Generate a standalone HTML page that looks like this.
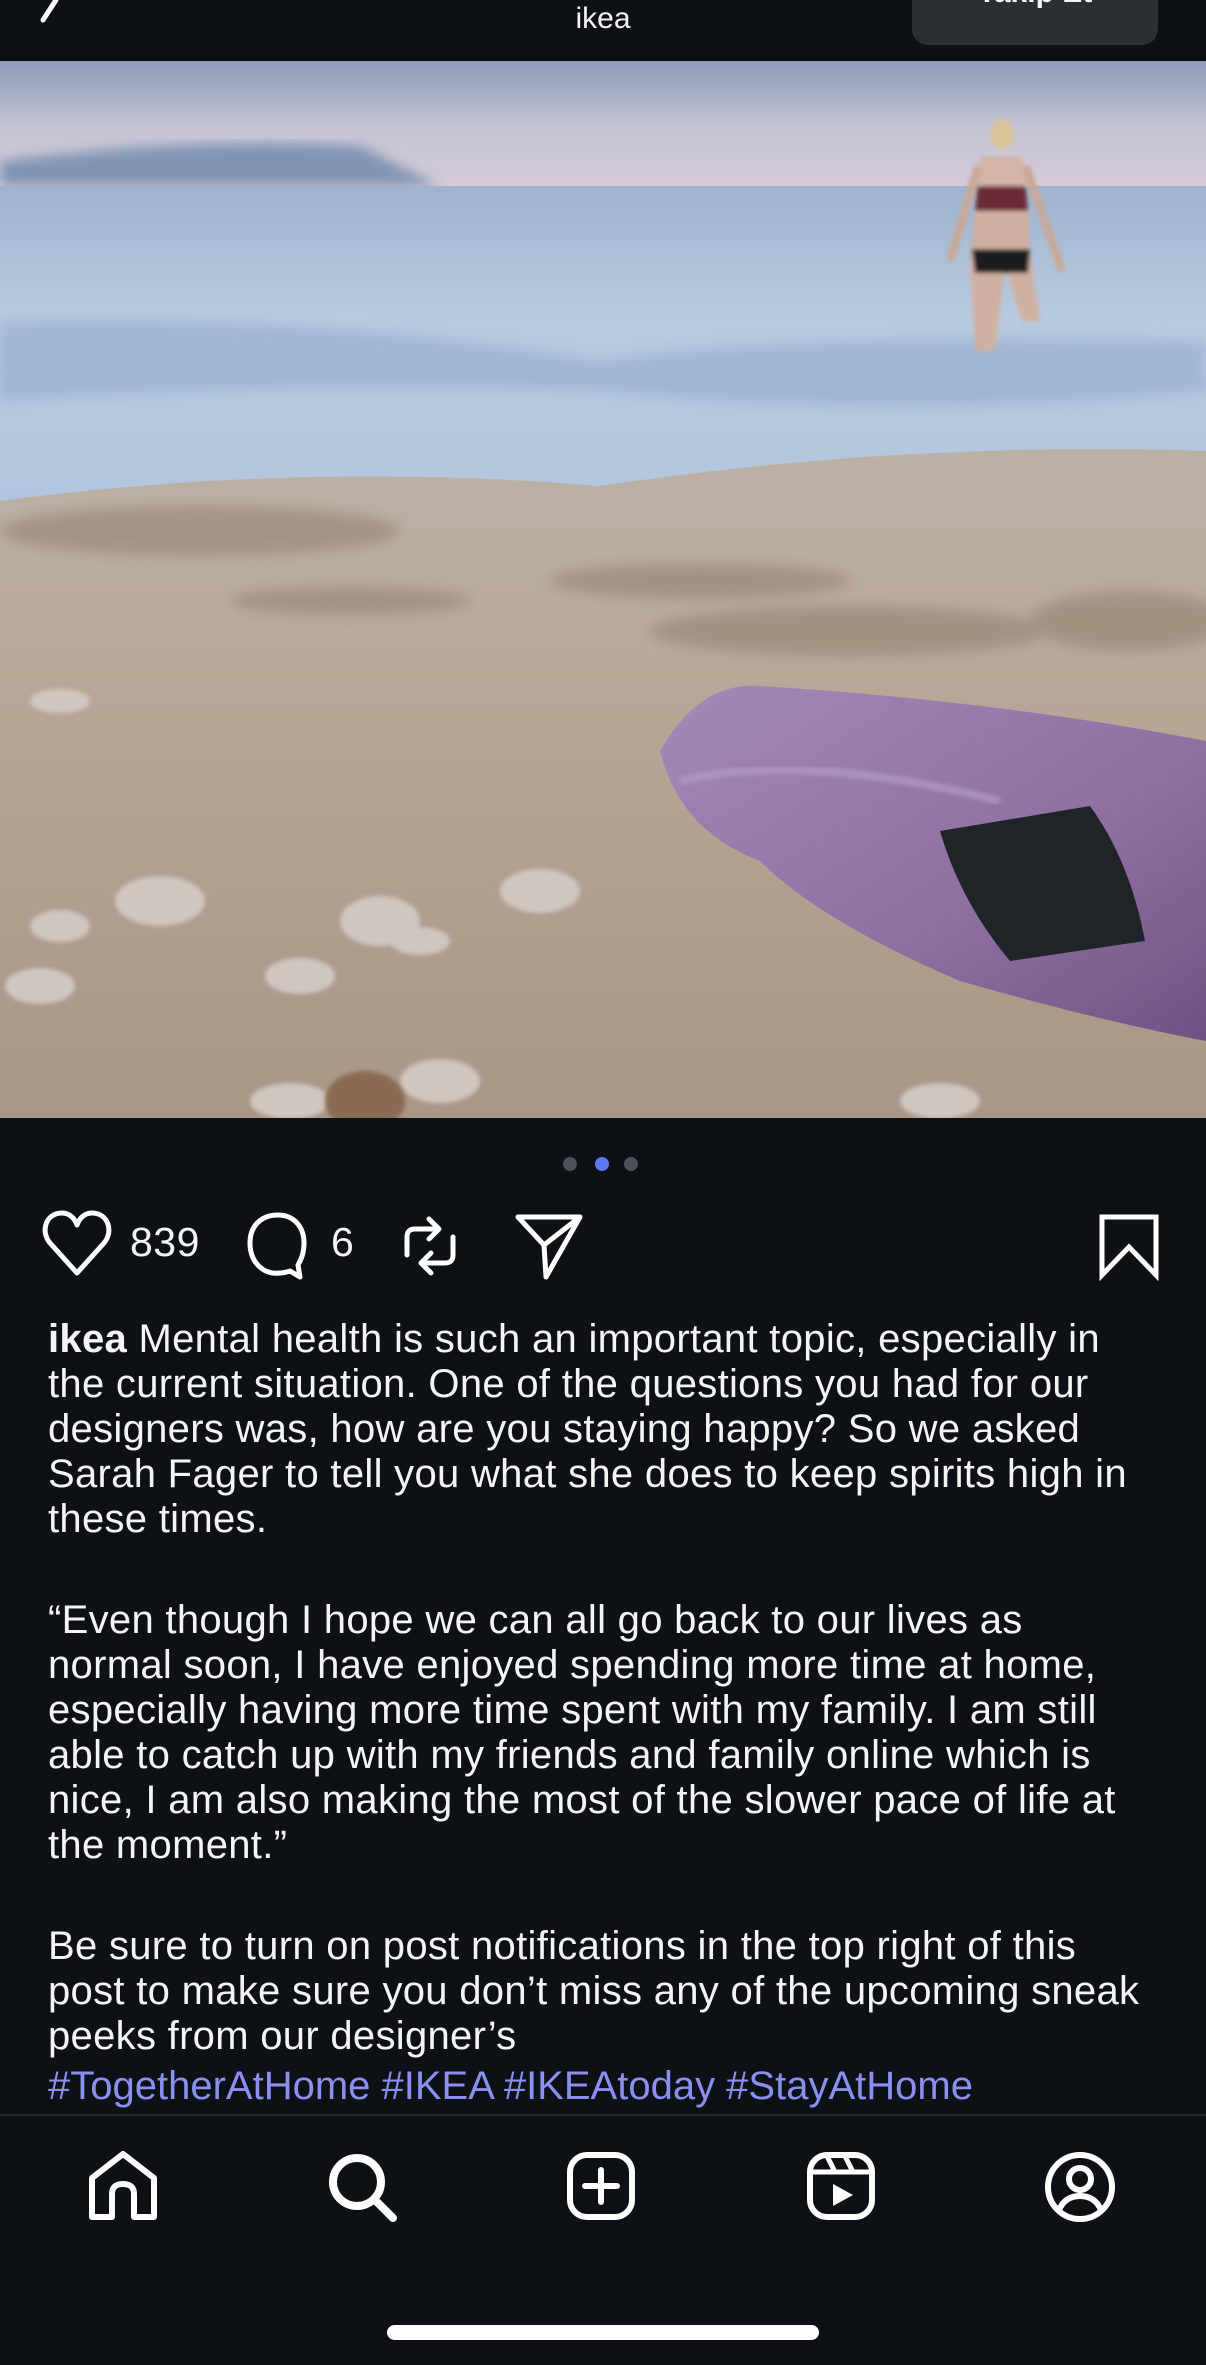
<!DOCTYPE html>
<html><head><meta charset="utf-8"><style>
html,body{margin:0;padding:0;background:#0d1015;}
body{width:1206px;height:2365px;position:relative;overflow:hidden;font-family:"Liberation Sans",sans-serif;color:#f4f4f5;}
.hdr{position:absolute;left:0;top:0;width:1206px;height:61px;background:#0d1015;}
.title{position:absolute;left:0;width:1206px;text-align:center;top:2px;font-size:30px;}
.btn{position:absolute;left:912px;top:-20px;width:246px;height:65px;background:#2b2e33;border-radius:16px;}
.btn span{position:absolute;left:0;width:100%;text-align:center;top:-4px;font-size:30px;font-weight:bold;}
.photo{position:absolute;left:0;top:61px;width:1206px;height:1057px;}
.dot{position:absolute;top:1157px;width:14px;height:14px;border-radius:50%;background:#4b5059;}
.txt{position:absolute;left:48px;top:1317px;font-size:40px;line-height:45px;white-space:nowrap;letter-spacing:0.3px;}
.txt p{margin:0 0 56px 0;}
.tag{color:#8a8ff0;letter-spacing:0;}
.sep{position:absolute;left:0;top:2114px;width:1206px;height:2px;background:#22252b;}
.bar{position:absolute;left:387px;top:2325px;width:432px;height:15px;border-radius:8px;background:#fff;}
svg{position:absolute;}
</style></head><body>
<div class="hdr">
<svg style="left:28px;top:0" width="40" height="30" viewBox="0 0 40 30"><path d="M28 0 L15 20" stroke="#fff" stroke-width="5" stroke-linecap="round" fill="none"/></svg>
<div class="title">ikea</div>
<div class="btn"><span>Takip Et</span></div>
</div>
<svg class="photo" style="left:0;top:61px" width="1206" height="1057" viewBox="0 0 1206 1057">
<defs>
<linearGradient id="sky" x1="0" y1="0" x2="0" y2="1"><stop offset="0" stop-color="#8d9bb8"/><stop offset="0.5" stop-color="#c2c3d4"/><stop offset="1" stop-color="#d8ccd8"/></linearGradient>
<linearGradient id="sea" x1="0" y1="0" x2="0" y2="1"><stop offset="0" stop-color="#9fb4d0"/><stop offset="0.4" stop-color="#b8cadf"/><stop offset="1" stop-color="#b0c6de"/></linearGradient>
<linearGradient id="sand" x1="0" y1="0" x2="0" y2="1"><stop offset="0" stop-color="#bdb1a6"/><stop offset="0.4" stop-color="#b7a696"/><stop offset="1" stop-color="#a89686"/></linearGradient>
<linearGradient id="towel" x1="0" y1="0" x2="1" y2="1"><stop offset="0" stop-color="#a489b8"/><stop offset="0.6" stop-color="#8e6fa2"/><stop offset="1" stop-color="#6f5285"/></linearGradient>
<filter id="b"><feGaussianBlur stdDeviation="6"/></filter>
<filter id="b2"><feGaussianBlur stdDeviation="2"/></filter>
</defs>
<rect width="1206" height="130" fill="url(#sky)"/>
<path d="M0 100 Q200 75 360 85 L440 125 L0 125Z" fill="#8094b4" filter="url(#b)"/>
<rect y="125" width="1206" height="330" fill="url(#sea)"/>
<path d="M0 260 Q300 250 600 300 Q800 270 1206 280 L1206 330 Q900 360 600 330 Q300 320 0 340Z" fill="#8aa6cc" opacity="0.5" filter="url(#b)"/>
<path d="M0 440 Q300 400 600 425 Q900 380 1206 390 L1206 1057 L0 1057Z" fill="url(#sand)"/>
<g filter="url(#b)" fill="#9a8878" opacity="0.7">
<ellipse cx="200" cy="470" rx="200" ry="25"/><ellipse cx="700" cy="520" rx="150" ry="18"/><ellipse cx="850" cy="570" rx="200" ry="25"/><ellipse cx="1130" cy="560" rx="100" ry="30"/><ellipse cx="350" cy="540" rx="120" ry="14"/>
</g>
<g filter="url(#b2)" fill="#cfc6c0">
<ellipse cx="540" cy="830" rx="40" ry="22"/><ellipse cx="160" cy="840" rx="45" ry="25"/><ellipse cx="60" cy="865" rx="30" ry="16"/><ellipse cx="380" cy="860" rx="40" ry="25"/><ellipse cx="300" cy="915" rx="35" ry="18"/><ellipse cx="440" cy="1020" rx="40" ry="22"/><ellipse cx="290" cy="1040" rx="40" ry="18"/><ellipse cx="40" cy="925" rx="35" ry="18"/><ellipse cx="60" cy="640" rx="30" ry="12"/><ellipse cx="420" cy="880" rx="30" ry="14"/><ellipse cx="940" cy="1040" rx="40" ry="18"/>
</g>
<ellipse cx="365" cy="1040" rx="40" ry="30" fill="#8a6a55" filter="url(#b2)"/>
<path d="M660 690 Q700 620 760 625 Q1000 640 1206 680 L1206 980 Q1100 960 960 920 Q820 860 760 800 Q680 770 660 690Z" fill="url(#towel)"/>
<path d="M680 720 Q800 690 1000 740" stroke="#b7a1c8" stroke-width="8" fill="none" opacity="0.6" filter="url(#b2)"/>
<path d="M940 770 L1090 745 Q1130 800 1145 880 L1010 900 Q960 840 940 770Z" fill="#1f2428"/>
<g filter="url(#b2)">
<ellipse cx="1002" cy="73" rx="12" ry="15" fill="#d9c49a"/>
<path d="M978 120 L1025 120 L1028 150 L975 150Z" fill="#6a2a38"/>
<path d="M975 150 L1028 150 L1030 190 L1040 260 L1022 260 L1005 205 L995 290 L975 290 L970 200Z" fill="#d0b0a0"/>
<path d="M972 188 L1030 188 L1028 212 L975 212Z" fill="#1a1a1e"/>
<path d="M980 95 L1022 95 L1030 125 L975 125Z" fill="#d3b5a6"/>
<path d="M978 105 L950 200 M1026 105 L1062 210" stroke="#c9a898" stroke-width="8"/>
</g>
</svg>
<div class="dot" style="left:563px"></div>
<div class="dot" style="left:595px;background:#5a78f0"></div>
<div class="dot" style="left:624px"></div>
<svg style="left:40px;top:1205px" width="80" height="80" viewBox="0 0 80 80"><path d="M37 68 L10 38 C0 26 6 8 22 8 C30 8 35 14 37 20 C39 14 44 8 52 8 C68 8 74 26 64 38Z" stroke="#fff" stroke-width="5" fill="none" stroke-linejoin="round"/></svg>
<div style="position:absolute;left:130px;top:1219px;font-size:41px;letter-spacing:0.5px">839</div>
<svg style="left:240px;top:1205px" width="80" height="80" viewBox="0 0 80 80"><path d="M40 68 C24 70 10 58 10 38 C10 20 22 10 38 10 C54 10 64 22 64 38 C64 50 60 56 58 60 L60 72 L50 66 C47 67 44 68 40 68Z" stroke="#fff" stroke-width="5" fill="none" stroke-linejoin="round"/></svg>
<div style="position:absolute;left:331px;top:1219px;font-size:41px">6</div>
<svg style="left:395px;top:1205px" width="70" height="80" viewBox="0 0 70 80"><path d="M12 50 V32 Q12 24 20 24 H40 M34 14 L44 24 L34 34 M58 32 V50 Q58 58 50 58 H30 M36 48 L26 58 L36 68" stroke="#fff" stroke-width="5" fill="none" stroke-linecap="round" stroke-linejoin="round"/></svg>
<svg style="left:510px;top:1205px" width="80" height="80" viewBox="0 0 80 80"><path d="M8 12 H70 L36 72 L34 40Z M34 40 L70 12" stroke="#fff" stroke-width="5" fill="none" stroke-linejoin="round"/></svg>
<svg style="left:1090px;top:1205px" width="80" height="80" viewBox="0 0 80 80"><path d="M12 12 H66 V70 L39 42 L12 70Z" stroke="#fff" stroke-width="5" fill="none" stroke-linejoin="miter"/></svg>
<div class="txt">
<p><b>ikea</b> Mental health is such an important topic, especially in<br>the current situation. One of the questions you had for our<br>designers was, how are you staying happy? So we asked<br>Sarah Fager to tell you what she does to keep spirits high in<br>these times.</p>
<p>“Even though I hope we can all go back to our lives as<br>normal soon, I have enjoyed spending more time at home,<br>especially having more time spent with my family. I am still<br>able to catch up with my friends and family online which is<br>nice, I am also making the most of the slower pace of life at<br>the moment.”</p>
<p style="margin:0">Be sure to turn on post notifications in the top right of this<br>post to make sure you don’t miss any of the upcoming sneak<br>peeks from our designer’s<br><span class="tag" style="display:inline-block;margin-top:5px">#TogetherAtHome #IKEA #IKEAtoday #StayAtHome</span></p>
</div>
<div class="sep"></div>
<svg style="left:86px;top:2150px" width="75" height="75" viewBox="0 0 75 75"><path d="M6 67 V28 L37 4 L68 28 V67 H48 V44 Q48 34 37 34 Q26 34 26 44 V67Z" stroke="#fff" stroke-width="6" fill="none" stroke-linejoin="round"/></svg>
<svg style="left:325px;top:2150px" width="75" height="75" viewBox="0 0 75 75"><circle cx="32" cy="32" r="24" stroke="#fff" stroke-width="8" fill="none"/><path d="M50 50 L68 68" stroke="#fff" stroke-width="8" stroke-linecap="round"/></svg>
<svg style="left:565px;top:2150px" width="75" height="75" viewBox="0 0 75 75"><rect x="5" y="5" width="62" height="62" rx="17" stroke="#fff" stroke-width="6" fill="none"/><path d="M36 20 V52 M20 36 H52" stroke="#fff" stroke-width="6" stroke-linecap="round"/></svg>
<svg style="left:805px;top:2150px" width="75" height="75" viewBox="0 0 75 75"><rect x="5" y="5" width="62" height="62" rx="17" stroke="#fff" stroke-width="6" fill="none"/><path d="M5 22 H67 M22 6 L30 22 M40 6 L48 22" stroke="#fff" stroke-width="5"/><path d="M28 34 L48 45 L28 56Z" fill="#fff"/></svg>
<svg style="left:1043px;top:2150px" width="75" height="75" viewBox="0 0 75 75"><circle cx="37" cy="37" r="32" stroke="#fff" stroke-width="6" fill="none"/><circle cx="37" cy="29" r="11" stroke="#fff" stroke-width="6" fill="none"/><path d="M16 60 Q22 46 37 46 Q52 46 58 60" stroke="#fff" stroke-width="6" fill="none"/></svg>
<div class="bar"></div>
</body></html>
